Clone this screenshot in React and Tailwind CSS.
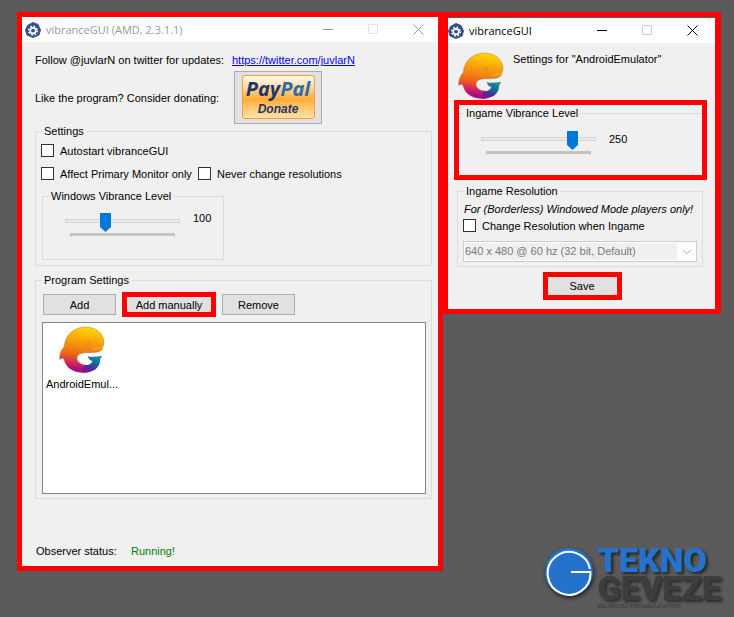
import { useState } from 'react'

export default function App() {
  return (
    <div className="min-h-screen bg-[#5b5b5b] pl-[17px] pr-[13px] pt-3 pb-[7px] grid grid-cols-[426fr_278fr] font-['Liberation_Sans',Arial,sans-serif] text-[11px] leading-[14px] text-black">
      <main className="min-w-0 self-start border-5 border-[#ff0000] bg-[#f0f0f0]">
        <MainWindow />
      </main>
      <div className="min-w-0 flex flex-col">
        <aside className="border-5 border-r-6 border-[#ff0000] bg-[#f0f0f0]">
          <SettingsWindow />
        </aside>
        <SiteLogo />
      </div>
    </div>
  )
}

// Main vibranceGUI window
function MainWindow() {
  const [level, setLevel] = useState(100);

  return (
    <>
      <TitleBar title="vibranceGUI (AMD, 2.3.1.1)" active={false} />
      <div className="pl-[13px] pr-[6px] pb-2">
        <div className="flex pt-[11px] pb-1">
          <span className="w-[197px]">Follow @juvlarN on twitter for updates:</span>
          <a href="https://twitter.com/juvlarN" className="text-[#0000ff] underline">https://twitter.com/juvlarN</a>
        </div>
        <div className="flex items-center">
          <span className="w-[199px]">Like the program? Consider donating:</span>
          <PayPalButton />
        </div>

        <fieldset className="border border-[#dcdcdc] pl-[5px] pr-[5px] pb-[5px]">
          <legend className="ml-px px-[2px]">Settings</legend>
          <div className="flex pt-[6px]">
            <CheckBox label="Autostart vibranceGUI" />
          </div>
          <div className="grid grid-cols-[157px_1fr] pt-[10px]">
            <CheckBox label="Affect Primary Monitor only" />
            <CheckBox label="Never change resolutions" />
          </div>
          <fieldset className="border border-[#dcdcdc] mt-[9px] ml-px w-[182px] h-[71px] pl-[22px]">
            <legend className="-ml-4 px-[2px]">Windows Vibrance Level</legend>
            <div className="flex gap-[13px] pt-[10px]">
              <Slider label="Windows Vibrance Level" value={level} onChange={setLevel} />
              <output className="-mt-0.5">{level}</output>
            </div>
          </fieldset>
        </fieldset>

        <fieldset className="border border-[#dcdcdc] mt-[7px] pl-[6px] pr-[5px] pb-1">
          <legend className="px-[2px]">Program Settings</legend>
          <div className="flex items-center gap-[6px] pt-[5px] pl-px">
            <Button>Add</Button>
            <div className="border-5 border-[#ff0000] flex">
              <button className="w-[84px] h-[15px] bg-[#e1e1e1] whitespace-nowrap">Add manually</button>
            </div>
            <Button>Remove</Button>
          </div>
          <ul className="mt-[5px] h-[172px] border border-[#828790] bg-white px-1 py-[3px]">
            <li className="w-[70px] flex flex-col items-center gap-[3px]">
              <DolphinIcon />
              <span>AndroidEmul...</span>
            </li>
          </ul>
        </fieldset>

        <div className="flex mt-[45px] pl-px">
          <span className="w-[95px]">Observer status:</span>
          <span className="text-[#008000]">Running!</span>
        </div>
      </div>
    </>
  )
}

// Per program settings window
function SettingsWindow() {
  const [level, setLevel] = useState(250);

  return (
    <>
      <div className="border-t border-[#5b5b5b]">
        <TitleBar title="vibranceGUI" active={true} />
      </div>
      <div className="pl-[6px] pr-2 pb-[9px]">
        <div className="flex gap-2 pt-[9px] pl-[3px]">
          <DolphinIcon />
          <span>Settings for "AndroidEmulator"</span>
        </div>

        <div className="border-5 border-[#ff0000] h-20">
          <fieldset className="border-t border-[#dcdcdc] pl-[22px] pt-[11px] mt-px">
            <legend className="-ml-[17px] px-[2px]">Ingame Vibrance Level</legend>
            <div className="flex gap-[13px]">
              <Slider label="Ingame Vibrance Level" value={level} onChange={setLevel} />
              <output className="pt-px">{level}</output>
            </div>
          </fieldset>
        </div>

        <fieldset className="border border-[#dcdcdc] mt-1 ml-[3px] mr-1 px-[5px] pb-1">
          <legend className="ml-px px-[2px]">Ingame Resolution</legend>
          <p className="italic pt-1 pl-px whitespace-nowrap">For (Borderless) Windowed Mode players only!</p>
          <div className="flex pt-[3px]">
            <CheckBox label="Change Resolution when Ingame" />
          </div>
          <div className="mt-[9px] h-[21px] border border-[#cccccc] bg-white p-px grid">
            <select disabled aria-label="Resolution" className="col-start-1 row-start-1 appearance-none mr-[18px] bg-[#f0f0f0] text-[#7a7a7a] leading-[17px]">
              <option>640 x 480 @ 60 hz (32 bit, Default)</option>
            </select>
            <svg className="col-start-1 row-start-1 justify-self-end self-center mr-[3px]" width="10" height="6" viewBox="0 0 10 6" fill="none" stroke="#a8a8a8">
              <path d="M1 0.8 L5 4.8 L9 0.8" />
            </svg>
          </div>
        </fieldset>

        <div className="flex justify-center mt-[5px] pl-[3px]">
          <div className="border-5 border-[#ff0000] flex">
            <button className="w-[69px] h-[18px] bg-[#e1e1e1]">Save</button>
          </div>
        </div>
      </div>
    </>
  )
}

// Title bar with the caption buttons, greyed out when the window has no focus
function TitleBar({ title, active }) {
  return (
    <header className={active ? "h-[25px] bg-white flex items-center pr-[13px] text-black" : "h-[25px] bg-white flex items-center pl-[3px] pr-[10px] text-[#999999]"}>
      <GearIcon />
      <h1 className="flex-1 pl-[5px] font-['Open_Sans','Noto_Sans',sans-serif] text-[11px] leading-4">{title}</h1>
      <div className="flex gap-[25px]">
        <button aria-label="Minimize" className="w-5 flex justify-center">
          <svg width="10" height="11" viewBox="0 0 10 11" stroke="currentColor"><path d="M0 5.5H10" /></svg>
        </button>
        <button aria-label="Maximize" className="w-5 flex justify-center">
          <svg width="10" height="11" viewBox="0 0 10 11" fill="none" stroke={active ? "#cccccc" : "#e5e5e5"}><path d="M0.5 0.5H9.5V9.5H0.5Z" /></svg>
        </button>
        <button aria-label="Close" className="w-5 flex justify-center">
          <svg width="11" height="11" viewBox="0 0 11 11" stroke="currentColor"><path d="M0.5 0.5L10.5 10.5M10.5 0.5L0.5 10.5" /></svg>
        </button>
      </div>
    </header>
  )
}

function Button({ children }) {
  return (
    <button className="w-[73px] h-[21px] border border-[#adadad] bg-[#e1e1e1]">{children}</button>
  )
}

function CheckBox({ label }) {
  return (
    <label className="flex items-center h-[13px] gap-[6px] whitespace-nowrap">
      <input type="checkbox" className="appearance-none size-[13px] border border-[#333333] bg-white checked:bg-[#0078d7]" />
      {label}
    </label>
  )
}

// Track bar with the tick strip below it
function Slider({ label, value, onChange }) {
  return (
    <div className="w-[115px] flex flex-col">
      <input
        type="range"
        min="0"
        max="300"
        aria-label={label}
        value={value}
        onChange={(event) => onChange(Number(event.target.value))}
        className="appearance-none block w-full h-4 bg-transparent [&::-webkit-slider-runnable-track]:h-1 [&::-webkit-slider-runnable-track]:border [&::-webkit-slider-runnable-track]:border-[#d6d6d6] [&::-webkit-slider-runnable-track]:bg-[#e7eaea] [&::-webkit-slider-thumb]:appearance-none [&::-webkit-slider-thumb]:w-[11px] [&::-webkit-slider-thumb]:h-[19px] [&::-webkit-slider-thumb]:-mt-[7px] [&::-webkit-slider-thumb]:bg-[#0078d7] [&::-webkit-slider-thumb]:[clip-path:polygon(0_0,100%_0,100%_74%,50%_100%,0_74%)]"
      />
      <div className="mt-1 mx-[5px] h-1 border-x border-t-3 border-[#c4c4c4]" />
    </div>
  )
}

function PayPalButton() {
  return (
    <button className="w-[88px] h-[53px] border border-[#adadad] bg-[#e1e1e1] flex justify-center pt-[3px]">
      <span className="w-[73px] h-11 rounded-[3px] border border-[#ff9933] bg-linear-to-b from-[#fff3d6] from-10% via-[#ffac2f] via-55% to-[#ffe3a8] flex flex-col items-center font-['Open_Sans',sans-serif] italic">
        <span className="text-[20px] leading-[26px] font-bold text-[#1b3668]">Pay<span className="text-[#2f6ca3]">Pal</span></span>
        <span className="font-['Liberation_Sans',sans-serif] text-[12px] leading-[14px] font-bold text-[#1b3668]">Donate</span>
      </span>
    </button>
  )
}

function GearIcon() {
  return (
    <svg width="16" height="16" viewBox="0 0 16 16">
      <path d="M8 0.5L13 2.5L15.5 8L14 13L8 15.5L2 13L0.5 8L2.5 3.5Z" fill="#34518d" stroke="#34518d" strokeLinejoin="round" />
      <circle cx="8" cy="8.6" r="2.8" fill="none" stroke="#ffffff" strokeWidth="1.7" />
      <circle cx="8" cy="8.6" r="4.3" fill="none" stroke="#ffffff" strokeWidth="1.5" strokeDasharray="1.7 1.68" />
    </svg>
  )
}

// Orange dolphin bent into a G
function DolphinIcon() {
  return (
    <svg width="48" height="48" viewBox="15 12 144 144">
      <defs>
        <linearGradient id="dolphin" x1="0.6" y1="0" x2="0.45" y2="1">
          <stop offset="0" stopColor="#ffd800" />
          <stop offset="0.35" stopColor="#f79a0c" />
          <stop offset="0.62" stopColor="#ee6a14" />
          <stop offset="0.78" stopColor="#dc3050" />
          <stop offset="0.92" stopColor="#b00a86" />
          <stop offset="1" stopColor="#8c1090" />
        </linearGradient>
        <linearGradient id="tail" x1="0.6" y1="0" x2="0.2" y2="1">
          <stop offset="0" stopColor="#12919a" />
          <stop offset="0.4" stopColor="#1a63a4" />
          <stop offset="0.7" stopColor="#4a2a9c" />
          <stop offset="1" stopColor="#a00c88" />
        </linearGradient>
      </defs>
      <path d="M153 58C150 32 128 15 96 15C62 16 36 39 34 73C24 84 19 97 20 113C25 108 29 108 33 112C38 137 60 152 91 152C98 152 106 151 112 148L100 129C84 129 73 121 72 109C73 97 84 92 103 92C124 93 141 91 148 82C150 74 153 66 153 58Z" fill="url(#dolphin)" stroke="#a56a32" strokeOpacity="0.6" strokeWidth="2" />
      <path d="M118 81C132 80 143 79 151 75" fill="none" stroke="#ffcf90" strokeWidth="1.5" />
      <path d="M104 103C118 106 133 104 147 102C145 107 141 111 141 116C141 137 120 152 91 152C86 143 90 133 100 129C109 129 117 124 118 117C112 116 106 111 104 103Z" fill="url(#tail)" />
      <circle cx="103" cy="64" r="3.5" fill="#d8cfa8" stroke="#8c6a2c" strokeWidth="2" />
    </svg>
  )
}

function SiteLogo() {
  return (
    <div className="mt-auto ml-auto flex items-start gap-1">
      <svg className="mt-px drop-shadow-[1px_2px_2px_#222222]" width="50" height="50" viewBox="0 0 50 50">
        <circle cx="25" cy="25" r="24" fill="#2472cb" />
        <path d="M46 22A21.4 21.4 0 1 0 46.4 25H27" fill="none" stroke="#ffffff" strokeWidth="2" />
      </svg>
      <div className="font-[Roboto,sans-serif] font-black text-[34px] leading-7">
        <div className="text-[#2472cb] [text-shadow:2px_2px_3px_#222222]">TEKNO</div>
        <div className="text-[#3d3d3d] [text-shadow:2px_2px_3px_#2b2b2b]">GEVEZE</div>
        <div className="text-[6px] leading-[8px] text-[#444444]">EĞLENCELİ TEKNOLOJİ SİTESİ</div>
      </div>
    </div>
  )
}
